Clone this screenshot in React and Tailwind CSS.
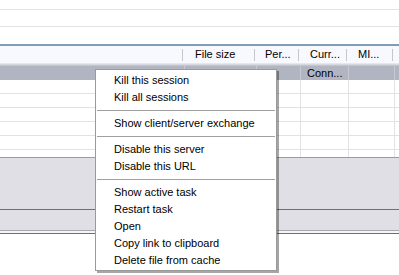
export default function App() {
  const font = { fontFamily: '"Liberation Sans", Arial, sans-serif' };
  const rows = [0, 1, 2, 3, 4];
  const Item = ({ children }) => (
    <div className="h-[17px] flex items-center pl-[18px] text-[11px] text-black leading-none">{children}</div>
  );
  const Sep = () => (
    <div className="h-[9px] flex items-center px-[1px]">
      <div className="h-px w-full bg-[#a0a0a0]" />
    </div>
  );
  return (
    <div className="relative w-[399px] h-[275px] overflow-hidden bg-white" style={font}>
      {/* top list rows */}
      <div className="h-[9px]" />
      <div className="h-px bg-[#e2e2e2]" />
      <div className="h-[16px]" />
      <div className="h-px bg-[#e2e2e2]" />
      <div className="h-[17px]" />
      {/* list border */}
      <div className="h-[2px] bg-[#819cb5]" />
      {/* header */}
      <div className="h-[17px] bg-[#f8f9fe] flex text-[11px] text-black">
        <div className="w-[183px] relative">
          <div className="absolute right-0 top-[3px] h-[12px] w-px bg-[#c5c5cc]" />
        </div>
        <div className="w-[72px] relative pl-[12px] flex items-center">
          File size
          <div className="absolute right-0 top-[3px] h-[12px] w-px bg-[#c5c5cc]" />
        </div>
        <div className="w-[44px] relative pl-[10px] flex items-center">
          Per...
          <div className="absolute right-0 top-[3px] h-[12px] w-px bg-[#c5c5cc]" />
        </div>
        <div className="w-[48px] relative pl-[11px] flex items-center">
          Curr...
          <div className="absolute right-0 top-[3px] h-[12px] w-px bg-[#c5c5cc]" />
        </div>
        <div className="w-[46px] relative pl-[11px] flex items-center">
          MI...
          <div className="absolute right-0 top-[3px] h-[12px] w-px bg-[#c5c5cc]" />
        </div>
      </div>
      <div className="h-px bg-[#e6e7ec]" />
      <div className="h-px bg-[#d6d8de]" />
      <div className="h-px bg-[#c4c6ce]" />
      {/* selected row */}
      <div className="h-[14px] bg-[#b1b4c1] flex text-[11px] text-black">
        <div className="w-[185px] border-r border-[#c8cad3]" />
        <div className="w-[72px] border-r border-[#c8cad3]" />
        <div className="w-[44px] border-r border-[#c8cad3]" />
        <div className="w-[48px] border-r border-[#c8cad3] pl-[6px] flex items-center">Conn...</div>
        <div className="w-[46px] border-r border-[#c8cad3]" />
      </div>
      {rows.map((r) => (
        <div key={r} className="h-[14px] border-b border-[#e2e2e2] flex">
          <div className="w-[185px] border-r border-[#e2e2e2]" />
          <div className="w-[72px] border-r border-[#e2e2e2]" />
          <div className="w-[44px] border-r border-[#e2e2e2]" />
          <div className="w-[48px] border-r border-[#e2e2e2]" />
          <div className="w-[46px] border-r border-[#e2e2e2]" />
        </div>
      ))}
      <div className="h-[7px] flex">
        <div className="w-[185px] border-r border-[#e2e2e2]" />
        <div className="w-[72px] border-r border-[#e2e2e2]" />
        <div className="w-[44px] border-r border-[#e2e2e2]" />
        <div className="w-[48px] border-r border-[#e2e2e2]" />
        <div className="w-[46px] border-r border-[#e2e2e2]" />
      </div>
      <div className="h-px bg-[#8aa0b8]" />
      {/* lower gray panel */}
      <div className="h-[51px] bg-[#dfdfe5]" />
      <div className="h-px bg-[#6e6e78]" />
      <div className="h-[20px] bg-[#dfdfe5]" />
      <div className="h-px bg-[#a8a8b0]" />
      <div className="h-[2px] bg-[#f6f6ee]" />
      <div className="h-px bg-[#6e6e78]" />

      {/* context menu */}
      <div className="absolute left-[95px] top-[69px] w-[182px] bg-white border border-[#9a9a9a] pt-[2px] pb-[1px] shadow-[2px_2px_0_rgba(0,0,0,0.35)]">
        <Item>Kill this session</Item>
        <Item>Kill all sessions</Item>
        <Sep />
        <Item>Show client/server exchange</Item>
        <Sep />
        <Item>Disable this server</Item>
        <Item>Disable this URL</Item>
        <Sep />
        <Item>Show active task</Item>
        <Item>Restart task</Item>
        <Item>Open</Item>
        <Item>Copy link to clipboard</Item>
        <Item>Delete file from cache</Item>
      </div>
    </div>
  );
}
